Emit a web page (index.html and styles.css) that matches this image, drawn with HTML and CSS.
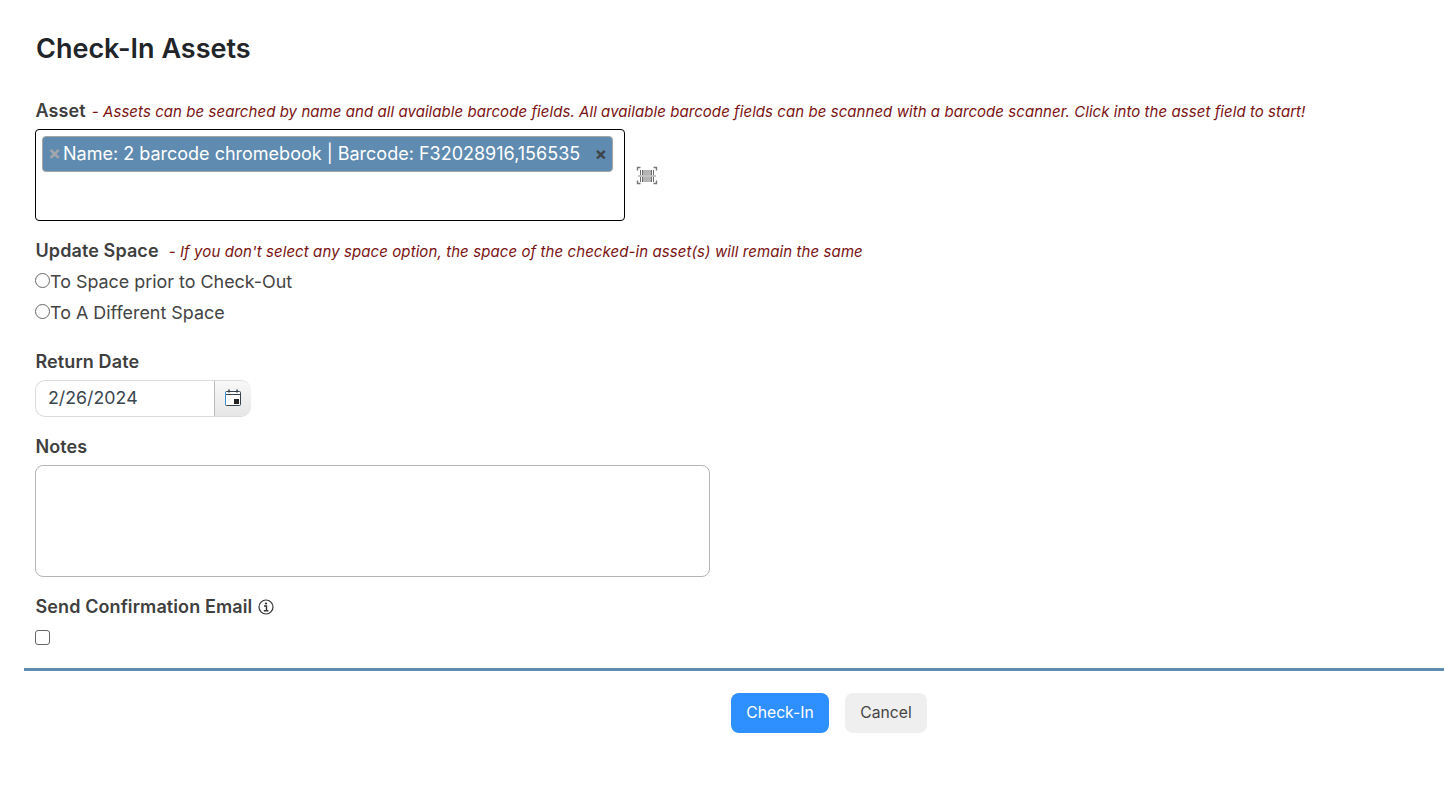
FILE: index.html
```html
<!DOCTYPE html>
<html lang="en">
<head>
<meta charset="utf-8">
<title>Check-In Assets</title>
<link rel="stylesheet" href="styles.css">
</head>
<body>
<main class="page">
  <div class="form">
    <h1 class="title">Check-In Assets</h1>
    <div class="label-row asset-label">
      <span class="label">Asset</span>
      <em class="hint">- Assets can be searched by name and all available barcode fields. All available barcode fields can be scanned with a barcode scanner. Click into the asset field to start!</em>
    </div>
    <div class="asset-row">
      <div class="asset-box">
        <div class="chip">
          <span class="chip-x">×</span>
          <span class="chip-text">Name: 2 barcode chromebook | Barcode: F32028916,156535</span>
          <span class="chip-close">×</span>
        </div>
      </div>
      <svg class="barcode" width="22" height="20" viewBox="0 0 22 20" aria-hidden="true">
        <path d="M1.500 4.500V1.500H4.500M17.500 1.500h3V4.500M1.500 14.500v3H4.500M17.500 17.500h3V14.500" fill="none" stroke="#777" stroke-width="1.400"/>
        <path d="M4.500 4v5M6.500 4v5M8 4v5M10 4v5M12 4v5M14 4v5M15.500 4v5M17.500 4v5M4.500 11v5M6.500 11v5M8 11v5M10 11v5M12 11v5M14 11v5M15.500 11v5M17.500 11v5" stroke="#6a6a6a" stroke-width="1"/>
        <path d="M2 10h18" stroke="#aaa" stroke-width="1.400"/>
      </svg>
    </div>
    <div class="label-row space-label">
      <span class="label">Update Space</span>
      <em class="hint space-hint">- If you don't select any space option, the space of the checked-in asset(s) will remain the same</em>
    </div>
    <label class="radio-row"><input class="radio" type="radio" name="space">To Space prior to Check-Out</label>
    <label class="radio-row"><input class="radio" type="radio" name="space">To A Different Space</label>
    <div class="label date-label">Return Date</div>
    <div class="date">
      <span class="date-value">2/26/2024</span>
      <span class="date-btn">
        <svg width="16" height="17" viewBox="0 0 16 17" aria-hidden="true">
          <rect x="0.500" y="2.500" width="15" height="14" rx="1" fill="#fff" stroke="#34424e"/>
          <path d="M1 5.500h14" stroke="#34424e"/>
          <path d="M4 0.500v3M12 0.500v3" stroke="#34424e" stroke-width="1.500"/>
          <rect x="9" y="10" width="5" height="5" fill="#222"/>
          <path d="M0.500 3v13" stroke="#3b8fd0"/>
        </svg>
      </span>
    </div>
    <div class="label notes-label">Notes</div>
    <div class="notes"></div>
    <div class="label email-label">Send Confirmation Email
      <svg class="info" width="16" height="16" viewBox="0 0 16 16" aria-hidden="true">
        <circle cx="8" cy="8" r="7" fill="none" stroke="#333" stroke-width="1.200"/>
        <circle cx="8" cy="4.500" r="1.100" fill="#333"/>
        <path d="M6 7h2.500v4.300M5.800 11.700h4.600" fill="none" stroke="#333" stroke-width="1.400"/>
      </svg>
    </div>
    <input class="check" type="checkbox">
  </div>
  <div class="footer">
    <button class="btn primary" type="button">Check-In</button>
    <button class="btn secondary" type="button">Cancel</button>
  </div>
</main>
</body>
</html>
```

FILE: styles.css
```css
* { box-sizing: border-box; }
html, body { margin: 0; padding: 0; }
body {
  background: #fff;
  font-family: Inter, "Liberation Sans", sans-serif;
  color: #3f3f3f;
  height: 788px;
  overflow: hidden;
}
.page { padding-left: 24px; padding-top: 32px; }
.form { padding-left: 11px; display: flex; flex-direction: column; align-items: flex-start; }
.title {
  margin: 0;
  padding-left: 1px;
  font-size: 27px;
  line-height: 33px;
  font-weight: 600;
  color: #212529;
}
.label-row { display: flex; align-items: baseline; white-space: nowrap; }
.label { font-size: 18px; line-height: 22px; font-weight: 600; color: #3f3f3f; padding-left: 0.500px; letter-spacing: 0.100px; }
.hint { font-size: 15px; line-height: 22px; color: #7a1212; margin-left: 6px; font-style: italic; letter-spacing: 0.060px; }
.space-hint { margin-left: 10px; letter-spacing: 0.090px; }
.asset-label { margin-top: 35px; }
.asset-row { display: flex; align-items: center; margin-top: 6px; }
.asset-box {
  width: 590px;
  height: 92px;
  border: 1px solid #000;
  border-radius: 4px;
  padding: 6px;
}
.chip {
  width: 571px;
  height: 36px;
  background: #5f8bb0;
  border: 1px solid #a5a5a5;
  border-radius: 4px;
  display: flex;
  align-items: center;
  color: #fff;
  font-size: 18px;
  padding: 0 5px 2px 6px;
  white-space: nowrap;
}
.chip-x { color: #a3a7ab; font-weight: 700; font-size: 19px; width: 14px; margin-left: -1px; margin-right: 1px; }
.chip-text { flex: 1; }
.chip-close { color: #3f4449; font-weight: 700; font-size: 18px; }
.barcode { margin-left: 11px; margin-top: 1px; }
.space-label { margin-top: 19px; }
.radio-row {
  display: flex;
  align-items: center;
  height: 31px;
  font-size: 17.900px;
  color: #444;
}
.radio-row:first-of-type { margin-top: 3px; }
.radio { margin: 0; width: 15px; height: 15px; margin-top: -3px; appearance: none; border: 1px solid #666; border-radius: 50%; background: #fff; }
.date-label { margin-top: 23px; }
.date {
  margin-top: 7px;
  width: 216px;
  height: 37px;
  border: 1px solid #dcdcdc;
  border-right: 0;
  border-radius: 10px;
  display: flex;
  align-items: stretch;
  overflow: hidden;
}
.date-value { flex: 1; padding-left: 12px; font-size: 17.800px; line-height: 33px; color: #3a4650; }
.date-btn {
  width: 37px;
  border-left: 1px solid #bbb;
  background: linear-gradient(#f8f8f8, #e6e6e6);
  display: flex;
  align-items: center;
  justify-content: center;
  padding-bottom: 3px;
}
.notes-label { margin-top: 19px; }
.notes {
  margin-top: 7px;
  width: 675px;
  height: 112px;
  border: 1px solid #b5b5b5;
  border-radius: 8px;
}
.email-label { margin-top: 19px; display: flex; align-items: center; gap: 6px; }
.check {
  margin: 12px 0 0;
  width: 15px;
  height: 15px;
  appearance: none;
  border: 1px solid #666;
  border-radius: 3px;
  background: #fff;
}
.footer {
  margin-top: 23px;
  border-top: 3px solid #5f8bb0;
  padding-top: 22px;
  padding-left: 707px;
  display: flex;
  gap: 16px;
}
.btn {
  height: 40px;
  border: 0;
  border-radius: 8px;
  font-family: inherit;
  font-size: 15.700px;
  padding-bottom: 2px;
}
.primary { width: 98px; background: #2e8fff; color: #fff; }
.secondary { width: 82px; background: #efefef; color: #444; }
```
